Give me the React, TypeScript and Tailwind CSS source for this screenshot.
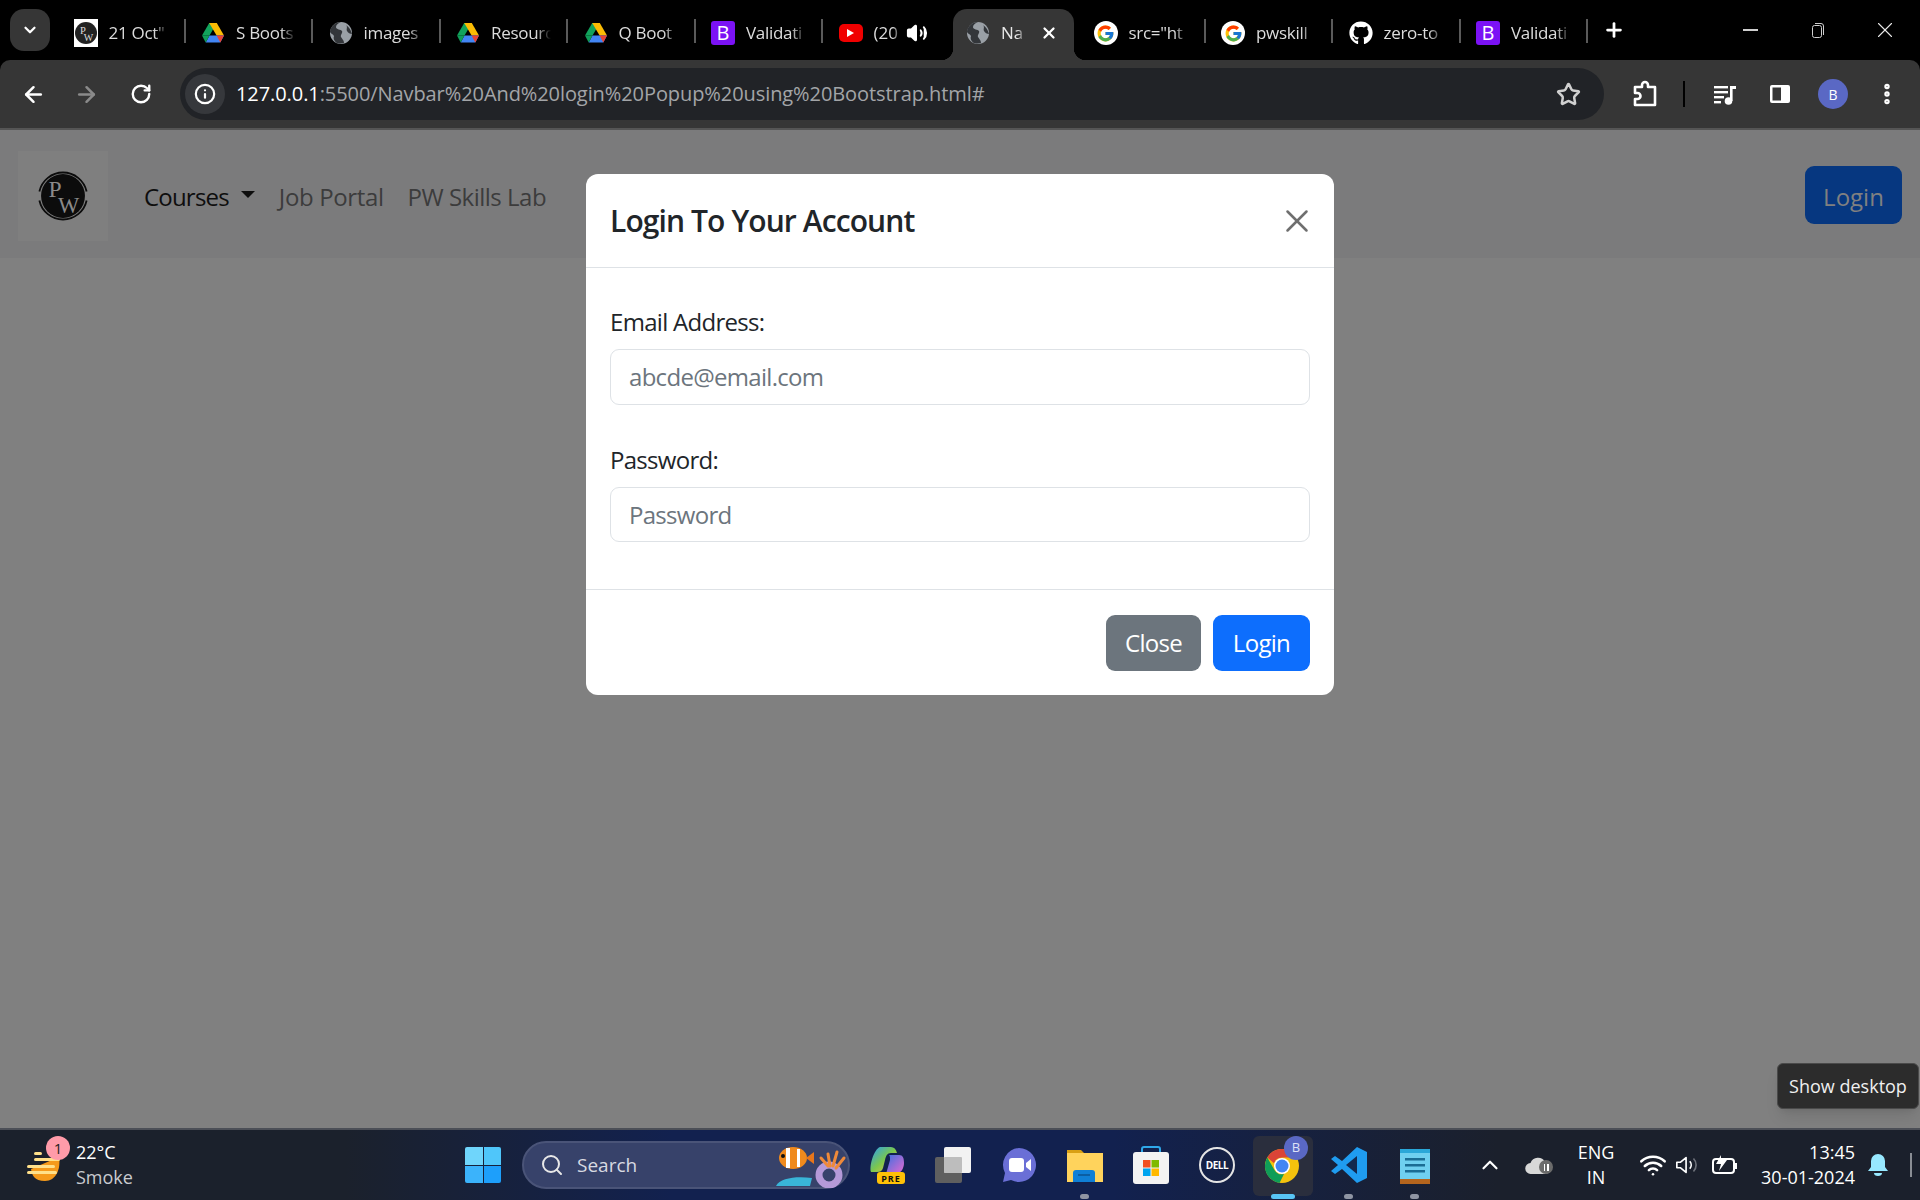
import { ArrowLeft, ArrowRight, ChevronDown, ChevronUp, Info, MoreVertical, Plus, RotateCw, Search, Star, Volume2, Wifi, X } from 'lucide-react';
import { FaGithub } from 'react-icons/fa';
import { FcGoogle } from 'react-icons/fc';

type IconKind = 'pw' | 'drive' | 'globe' | 'bootstrap' | 'youtube' | 'google' | 'github';

const tabs: { icon: IconKind; title: string; active?: boolean; audio?: boolean }[] = [
  { icon: 'pw', title: '21 Oct"' },
  { icon: 'drive', title: 'S Boots' },
  { icon: 'globe', title: 'images' },
  { icon: 'drive', title: 'Resourc' },
  { icon: 'drive', title: 'Q Boot' },
  { icon: 'bootstrap', title: 'Validati' },
  { icon: 'youtube', title: '(20', audio: true },
  { icon: 'globe', title: 'Na', active: true },
  { icon: 'google', title: 'src="ht' },
  { icon: 'google', title: 'pwskill' },
  { icon: 'github', title: 'zero-to' },
  { icon: 'bootstrap', title: 'Validati' },
];

function PwLogo({ size }: { size: number }) {
  return (
    <svg width={size} height={size} viewBox="0 0 48 48">
      <circle cx="24" cy="24" r="19.5" fill="#0c0c0c" />
      <path d="M3 20A21.5 21.5 0 0 1 45 20M3 28A21.5 21.5 0 0 0 45 28" fill="none" stroke="#0c0c0c" strokeWidth="1.6" />
      <text x="17" y="25" fontFamily="Liberation Serif, serif" fontSize="21" fill="#8a8a8a" textAnchor="middle">P</text>
      <text x="29" y="39" fontFamily="Liberation Serif, serif" fontSize="20" fill="#8a8a8a" textAnchor="middle">W</text>
    </svg>
  );
}

function Favicon({ kind }: { kind: IconKind }) {
  if (kind === 'pw') {
    return (
      <div className="flex h-7 w-6 items-center justify-center bg-white">
        <svg width="24" height="24" viewBox="0 0 48 48">
          <circle cx="24" cy="24" r="22" fill="#222" />
          <text x="18" y="25" fontFamily="Liberation Serif, serif" fontSize="21" fill="#ddd" textAnchor="middle">P</text>
          <text x="29" y="40" fontFamily="Liberation Serif, serif" fontSize="20" fill="#ddd" textAnchor="middle">W</text>
        </svg>
      </div>
    );
  }
  if (kind === 'drive') {
    return (
      <svg width="24" height="24" viewBox="0 0 24 24">
        <path d="M8.2 2h7.6l-7.3 12.6H1z" fill="#12a35c" />
        <path d="M15.800 2 23 14.600h-7.400L8.200 2z" fill="#fbbc04" />
        <path d="M23 14.600 19.300 21.500H4.700L8.500 14.600z" fill="#4285f4" />
        <path d="M1 14.600h7.500l-3.800 6.900z" fill="#0f9d58" />
        <path d="M15.600 14.600H23l-3.700 6.900z" fill="#ea4335" />
      </svg>
    );
  }
  if (kind === 'globe') {
    return (
      <svg width="24" height="24" viewBox="0 0 24 24">
        <circle cx="12" cy="12" r="11" fill="#9aa0a6" />
        <path d="M12 1c-3 1-5 3-5 5 0 3 5 2 6 4s-2 4-1 6 3 3 3 6c-2 .6-6 .6-8-.6C5 20 4 17 5 15c-1-2-3-2-4-4 0-5 5-10 11-10zM17 4c3 2 5 5 6 9-2 0-4-1-5-3s1-4-1-6z" fill="#33363a" />
      </svg>
    );
  }
  if (kind === 'bootstrap') {
    return (
      <div className="flex h-6 w-6 items-center justify-center rounded-[3px] bg-[#7b12f5] font-['Open_Sans',sans-serif] text-[20px] leading-none text-white">
        B
      </div>
    );
  }
  if (kind === 'youtube') {
    return (
      <div className="flex h-[18px] w-6 items-center justify-center rounded-[5px] bg-[#f00000]">
        <div className="h-0 w-0 border-y-[4px] border-l-[7px] border-y-transparent border-l-white" />
      </div>
    );
  }
  if (kind === 'google') {
    return (
      <div className="flex h-6 w-6 items-center justify-center rounded-full bg-white">
        <FcGoogle size={19} />
      </div>
    );
  }
  return (
    <div className="flex h-6 w-6 items-center justify-center rounded-full bg-black">
      <FaGithub size={24} color="#fff" />
    </div>
  );
}

function TabStrip() {
  return (
    <div className="flex h-[60px] items-start bg-black">
      <div className="ml-[10px] mt-[9px] flex h-[42px] w-[40px] items-center justify-center rounded-[14px] bg-[#363636]">
        <ChevronDown size={18} strokeWidth={3} color="#fff" />
      </div>
      <div className="ml-[8.5px] flex">
        {tabs.map((tab, i) => (
          <div
            key={i}
            className={
              tab.active
                ? 'relative ml-[2px] mr-[4.5px] mt-[9px] flex h-[51px] w-[121px] items-center rounded-t-[14px] bg-[#363636] pb-[3px] pl-[13px]'
                : 'relative mt-[9px] flex h-[51px] w-[127.5px] items-center pb-[3px] pl-[15px]'
            }
          >
            <div className="flex w-6 shrink-0 justify-center">
              <Favicon kind={tab.icon} />
            </div>
            <span
              className={
                tab.active
                  ? "ml-[11px] w-[24px] overflow-hidden whitespace-nowrap font-['Open_Sans',sans-serif] text-[17px] text-[#e8e8e8] [mask-image:linear-gradient(to_right,black_70%,transparent)]"
                  : tab.audio
                    ? "ml-[11px] w-[27px] overflow-hidden whitespace-nowrap font-['Open_Sans',sans-serif] text-[17px] text-[#dcdcdc] [mask-image:linear-gradient(to_right,black_70%,transparent)]"
                    : "ml-[11px] w-[60px] overflow-hidden whitespace-nowrap font-['Open_Sans',sans-serif] text-[17px] tracking-[-0.3px] text-[#dcdcdc] [mask-image:linear-gradient(to_right,black_75%,transparent)]"
              }
            >
              {tab.title}
            </span>
            {tab.audio && <Volume2 size={22} color="#fff" fill="#fff" className="ml-[5px]" />}
            {tab.active && <X size={18} strokeWidth={3} color="#fff" className="ml-[15px]" />}
            {!tab.active && i !== 6 && <div className="absolute left-[125px] top-[10px] h-[24px] w-[2px] bg-[#5a5a5a]" />}
            {tab.active && (
              <>
                <div className="absolute bottom-0 left-[-12px] h-[12px] w-[12px] bg-[radial-gradient(circle_at_0_0,transparent_12px,#363636_12.500px)]" />
                <div className="absolute bottom-0 right-[-12px] h-[12px] w-[12px] bg-[radial-gradient(circle_at_100%_0,transparent_12px,#363636_12.500px)]" />
              </>
            )}
          </div>
        ))}
        <div className="ml-[5px] mt-[9px] flex h-[42px] w-[40px] items-center justify-center">
          <Plus size={22} strokeWidth={3} color="#fff" />
        </div>
      </div>
      <div className="ml-auto flex h-[60px] items-center">
        <div className="flex w-[68px] justify-center"><div className="h-[1.500px] w-[15px] bg-[#cfcfcf]" /></div>
        <div className="flex w-[68px] justify-center">
          <svg width="16" height="18" viewBox="0 0 16 18" fill="none" stroke="#cfcfcf" strokeWidth="1">
            <rect x="2.500" y="4.500" width="9" height="12" rx="2" />
            <path d="M5 2.500h6a2.500 2.500 0 0 1 2.500 2.500v9" />
          </svg>
        </div>
        <div className="flex w-[68px] justify-center pl-[2px] pr-[4px]"><X size={26} strokeWidth={1} color="#e8e8e8" /></div>
      </div>
    </div>
  );
}

function Toolbar() {
  return (
    <div className="flex h-[70px] items-center rounded-t-[10px] border-b-2 border-[#555555] bg-[#363636]">
      <div className="flex w-[180px] items-center pl-[20px]">
        <div className="flex w-[26px] justify-center"><ArrowLeft size={25} strokeWidth={2.400} color="#fff" /></div>
        <div className="ml-[27px] flex w-[26px] justify-center"><ArrowRight size={25} strokeWidth={2.400} color="#8a8a8a" /></div>
        <div className="ml-[29px] flex w-[26px] justify-center"><RotateCw size={22} strokeWidth={2.600} color="#fff" /></div>
      </div>
      <div className="flex h-[52px] w-[1424px] items-center rounded-full bg-[#212327] pl-[5px] pr-[23px]">
        <div className="flex h-[40px] w-[40px] items-center justify-center rounded-full bg-[#36383c]">
          <Info size={22} strokeWidth={2.400} color="#fff" />
        </div>
        <div className="ml-[11px] font-['Open_Sans',sans-serif] text-[20px] tracking-[-0.08px] text-[#a3a5a8]">
          <span className="text-white">127.0.0.1</span>:5500/Navbar%20And%20login%20Popup%20using%20Bootstrap.html#
        </div>
        <Star size={25} strokeWidth={2.400} color="#d0d0d0" className="ml-auto" />
      </div>
      <div className="flex items-center">
        <svg width="28" height="28" viewBox="0 0 28 28" fill="none" stroke="#fff" strokeWidth="2.600" strokeLinejoin="round" className="ml-[27px]">
          <path d="M4 7h7V5a3 3 0 0 1 6 0v2h7v18H4v-6h2.500a3 3 0 0 0 0-6H4z" />
        </svg>
        <div className="ml-[24px] h-[26px] w-[2px] bg-black" />
        <svg width="28" height="28" viewBox="0 0 28 28" fill="#fff" className="ml-[26px]">
          <rect x="3" y="6" width="14" height="2.400" />
          <rect x="3" y="11" width="14" height="2.400" />
          <rect x="3" y="16" width="10" height="2.400" />
          <rect x="3" y="21" width="7" height="2.400" />
          <rect x="19" y="6" width="2.600" height="15" />
          <rect x="19" y="6" width="6" height="3" />
          <circle cx="17.500" cy="21" r="3.800" />
        </svg>
        <svg width="24" height="24" viewBox="0 0 24 24" className="ml-[29px]">
          <rect x="2" y="3" width="20" height="18" rx="2" fill="#fff" />
          <rect x="4.500" y="5.500" width="8.500" height="13" fill="#363636" />
        </svg>
        <div className="ml-[26px] flex h-[30px] w-[30px] items-center justify-center rounded-full bg-[#5a68c4] font-['Open_Sans',sans-serif] text-[14px] text-white">
          B
        </div>
        <MoreVertical size={26} strokeWidth={3} color="#fff" className="ml-[26px]" />
      </div>
    </div>
  );
}

function Navbar() {
  return (
    <div className="flex h-[128px] items-center bg-[#7b7b7c] pt-[5px] font-['Open_Sans',sans-serif] text-[24px]">
      <div className="ml-[18px] mt-[-2px] flex h-[90px] w-[90px] items-center justify-center bg-[#7f7f7f]">
        <PwLogo size={54} />
      </div>
      <div className="ml-[36px] flex items-center tracking-[-0.8px] text-[#0e0e0e]">
        Courses
        <div className="mb-[4px] ml-[12px] h-0 w-0 border-x-[7px] border-t-[7px] border-x-transparent border-t-[#0e0e0e]" />
      </div>
      <div className="ml-[24px] tracking-[-0.37px] text-[#3c3c3c]">Job Portal</div>
      <div className="ml-[24px] tracking-[-0.5px] text-[#3c3c3c]">PW Skills Lab</div>
      <div className="ml-auto mr-[18px] mt-[-3px] flex h-[58px] w-[97px] items-center justify-center rounded-[9px] bg-[#063780] pt-[3px] text-[#808080]">
        Login
      </div>
    </div>
  );
}

function LoginModal() {
  return (
    <div className="absolute inset-x-0 top-[44px] flex justify-center">
      <div className="w-[748px] rounded-[12px] bg-white font-['Open_Sans',sans-serif] text-[24px] tracking-[-0.7px] text-[#212529]">
        <div className="flex h-[94px] items-center justify-between border-b border-[#dee2e6] px-[24px]">
          <h5 className="text-[30px] font-semibold tracking-[-0.9px]">Login To Your Account</h5>
          <X size={38} strokeWidth={1.600} color="#6f6f6f" className="mr-[-6px]" />
        </div>
        <div className="border-b border-[#dee2e6] px-[24px] pb-[47px] pt-[36px]">
          <div className="mb-[9px] h-[36px] leading-[36px]">Email Address:</div>
          <div className="mb-[37px] flex h-[56px] items-center rounded-[9px] border border-[#dee2e6] px-[18px] text-[#6c757d]">abcde@email.com</div>
          <div className="mb-[9px] h-[36px] leading-[36px]">Password:</div>
          <div className="flex h-[55px] items-center rounded-[9px] border border-[#dee2e6] px-[18px] text-[#6c757d]">Password</div>
        </div>
        <div className="flex h-[105px] items-center justify-end gap-[12px] px-[24px] text-white">
          <div className="flex h-[56px] w-[95px] items-center justify-center rounded-[9px] bg-[#6c757d]">Close</div>
          <div className="flex h-[56px] w-[97px] items-center justify-center rounded-[9px] bg-[#0d6efd]">Login</div>
        </div>
      </div>
    </div>
  );
}

function WeatherIcon() {
  return (
    <svg width="36" height="40" viewBox="0 0 36 40">
      <path d="M32 12c2 12-3 24-14 24S5 30 4 24z" fill="#f59a1b" />
      <rect x="7" y="13" width="26" height="3" rx="1.500" fill="#ffe08a" />
      <rect x="0" y="20" width="28" height="3" rx="1.500" fill="#ffe08a" />
      <rect x="0" y="26" width="30" height="3" rx="1.500" fill="#ffe08a" />
      <rect x="7" y="7" width="8" height="3" rx="1.500" fill="#ffe08a" />
    </svg>
  );
}

function Fish() {
  return (
    <svg width="76" height="46" viewBox="0 0 76 46">
      <path d="M2 44c4-8 20-10 36-8l-2 8z" fill="#39b5d8" />
      <ellipse cx="19" cy="16" rx="14" ry="11" fill="#f08a1d" />
      <rect x="12" y="6" width="4" height="20" fill="#fff" />
      <rect x="23" y="7" width="3" height="18" fill="#fff" />
      <path d="M32 16l8-6v12z" fill="#e8761a" />
      <circle cx="9" cy="14" r="2" fill="#111" />
      <circle cx="55" cy="33" r="10" fill="none" stroke="#b59ad8" strokeWidth="7" />
      <path d="M56 24l-2-12M59 24l4-14M62 26l8-10M54 24l-7-8" stroke="#ef8a3a" strokeWidth="3" strokeLinecap="round" />
    </svg>
  );
}

function TaskIcon({ children, dot, running }: { children: React.ReactNode; dot?: boolean; running?: boolean }) {
  return (
    <div className="relative flex h-[60px] w-[66px] items-center justify-center">
      {running && <div className="absolute left-[3px] top-[1px] h-[60px] w-[60px] rounded-[6px] bg-[#2a2e3d]" />}
      <div className="relative flex items-center justify-center">{children}</div>
      {dot && <div className="absolute bottom-[-4px] left-[28px] h-[5px] w-[9px] rounded-full bg-[#8f95a3]" />}
      {running && <div className="absolute bottom-[-4px] left-[21px] h-[5px] w-[24px] rounded-full bg-[#58c5f5]" />}
    </div>
  );
}

function Taskbar() {
  return (
    <div className="flex h-[72px] shrink-0 items-center border-t-2 border-[#4c4f57] bg-[linear-gradient(90deg,#1b212c_0%,#1b212c_18%,#12214f_35%,#12214f_58%,#1b202c_78%,#1b202c_100%)] font-['Open_Sans',sans-serif] text-white">
      <div className="flex w-[465px] items-center pl-[27px]">
        <div className="relative">
          <WeatherIcon />
          <div className="absolute left-[19px] top-[-9px] flex h-[24px] w-[24px] items-center justify-center rounded-full bg-[#ff9ba9] text-[15px] text-[#222]">1</div>
        </div>
        <div className="ml-[13px] text-[18px] leading-[25px]">
          <div>22°C</div>
          <div className="text-[#c9cbd0]">Smoke</div>
        </div>
      </div>
      <div className="grid h-[36px] w-[36px] grid-cols-2 gap-[1px]">
        <div className="rounded-tl-[2px] bg-[#6fd5fb]" />
        <div className="rounded-tr-[2px] bg-[#4fc6fa]" />
        <div className="rounded-bl-[2px] bg-[#3bb3fb]" />
        <div className="rounded-br-[2px] bg-[#1d9ffb]" />
      </div>
      <div className="ml-[21px] flex h-[48px] w-[328px] items-center rounded-full border-2 border-[#4a5478] bg-[#37426a] pl-[16px]">
        <Search size={24} strokeWidth={2} color="#e8e8e8" />
        <span className="ml-[13px] text-[19px] text-[#d8dae2]">Search</span>
        <div className="ml-auto mr-[-2px]"><Fish /></div>
      </div>
      <div className="ml-[4px] flex">
        <TaskIcon>
          <svg width="36" height="38" viewBox="0 0 36 38">
            <defs>
              <linearGradient id="cp" x1="0" y1="0" x2="1" y2="1">
                <stop offset="0" stopColor="#2a9df4" />
                <stop offset="0.5" stopColor="#7ac74f" />
                <stop offset="1" stopColor="#f5c542" />
              </linearGradient>
              <linearGradient id="cp2" x1="0" y1="0" x2="1" y2="1">
                <stop offset="0" stopColor="#3c6fe0" />
                <stop offset="1" stopColor="#e86ad0" />
              </linearGradient>
            </defs>
            <path d="M11 1h11c3 0 5 2 6 6h-6c-4 0-5 3-6 7l-2 8c-1 3-3 4-6 4H2C0 20 5 3 11 1z" fill="url(#cp)" />
            <path d="M20 9h10c4 0 5 3 5 8s-3 11-9 11h-9l4-14c0-3 0-4-1-5z" fill="url(#cp2)" />
            <rect x="8" y="26" width="28" height="12" rx="3" fill="#ffc107" />
            <text x="22" y="35.500" fontFamily="Open Sans, sans-serif" fontSize="9" fontWeight="700" fill="#111" textAnchor="middle" letterSpacing="1">PRE</text>
          </svg>
        </TaskIcon>
        <TaskIcon>
          <svg width="36" height="36" viewBox="0 0 36 36">
            <rect x="0" y="10" width="27" height="26" rx="2" fill="#5f5f5f" />
            <rect x="9" y="0" width="27" height="26" rx="2" fill="#f2f2f2" />
            <rect x="9" y="10" width="18" height="16" rx="1" fill="#bdbdbd" />
          </svg>
        </TaskIcon>
        <TaskIcon>
          <svg width="36" height="36" viewBox="0 0 36 36">
            <path d="M18 1a17 17 0 1 1-8 32l-8 2 2-9A17 17 0 0 1 18 1z" fill="#6a6fd6" />
            <rect x="8" y="11" width="15" height="14" rx="3" fill="#fff" />
            <path d="M25 16l5-4v12l-5-4z" fill="#fff" />
          </svg>
        </TaskIcon>
        <TaskIcon dot>
          <svg width="36" height="36" viewBox="0 0 36 36">
            <path d="M0 3h14l4 4h18v28H0z" fill="#d9a014" />
            <rect x="0" y="6" width="36" height="29" fill="#ffd35c" />
            <path d="M6 35v-9a3 3 0 0 1 3-3h16a3 3 0 0 1 3 3v9z" fill="#0f7fd6" />
            <rect x="11" y="27" width="12" height="2" fill="#0b5ea3" />
          </svg>
        </TaskIcon>
        <TaskIcon>
          <svg width="36" height="38" viewBox="0 0 36 38">
            <path d="M9 8V3a2 2 0 0 1 2-2h14a2 2 0 0 1 2 2v5" fill="none" stroke="#2fa8ea" strokeWidth="2" />
            <rect x="0" y="6" width="36" height="32" rx="3" fill="#f3f3f3" />
            <rect x="10" y="14" width="7.500" height="7.500" fill="#f25022" />
            <rect x="18.500" y="14" width="7.500" height="7.500" fill="#7fba00" />
            <rect x="10" y="22.500" width="7.500" height="7.500" fill="#00a4ef" />
            <rect x="18.500" y="22.500" width="7.500" height="7.500" fill="#ffb900" />
          </svg>
        </TaskIcon>
        <TaskIcon>
          <div className="flex h-[36px] w-[36px] items-center justify-center rounded-full border-2 border-[#e4e4e4] text-[10px] font-bold tracking-[-0.5px]">DELL</div>
        </TaskIcon>
        <TaskIcon running>
          <svg width="38" height="38" viewBox="0 0 38 38">
            <circle cx="18" cy="20" r="17" fill="#f4c20d" />
            <path d="M18 3a17 17 0 0 1 14.700 8.500H18a8.500 8.500 0 0 0-8 5.800L3.300 11.500A17 17 0 0 1 18 3z" fill="#db4437" />
            <path d="M3.300 11.500l7.300 12.700A8.500 8.500 0 0 0 20 28l-4.500 9A17 17 0 0 1 3.300 11.500z" fill="#0f9d58" />
            <circle cx="18" cy="20" r="8" fill="#fff" />
            <circle cx="18" cy="20" r="6.500" fill="#4285f4" />
          </svg>
          <div className="absolute left-[20px] top-[-10px] flex h-[24px] w-[24px] items-center justify-center rounded-full bg-[#5a68c4] text-[13px] text-[#dfe2f7]">B</div>
        </TaskIcon>
        <TaskIcon dot>
          <svg width="36" height="36" viewBox="0 0 36 36">
            <path d="M26 0l10 5v26l-10 5-15-14-7 5-4-3 7-6-7-6 4-3 7 5z" fill="#1f9cf0" />
            <path d="M26 9v18l-11-9z" fill="#12284f" />
          </svg>
        </TaskIcon>
        <TaskIcon dot>
          <svg width="32" height="38" viewBox="0 0 32 38">
            <rect x="1" y="3" width="30" height="33" rx="2" fill="#6fd0f0" />
            <rect x="1" y="33" width="30" height="5" fill="#b5651d" />
            <rect x="1" y="3" width="30" height="4" fill="#2aa7d8" />
            <rect x="6" y="12" width="20" height="2.500" fill="#1b6d94" />
            <rect x="6" y="18" width="20" height="2.500" fill="#1b6d94" />
            <rect x="6" y="24" width="20" height="2.500" fill="#1b6d94" />
          </svg>
        </TaskIcon>
      </div>
      <div className="ml-[24px] flex items-center">
        <div className="flex w-[36px] justify-center"><ChevronUp size={26} strokeWidth={2} color="#fff" /></div>
        <div className="relative flex w-[60px] justify-center">
          <svg width="26" height="18" viewBox="0 0 26 18"><path d="M6 18a5.500 5.500 0 0 1-.5-11A8 8 0 0 1 20 6a6 6 0 0 1 0 12z" fill="#d8d8d8" /></svg>
          <div className="absolute left-[31px] top-[4px] flex h-[14px] w-[14px] items-center justify-center gap-[2px] rounded-full bg-[#6b6b6b]">
            <div className="h-[7px] w-[1.500px] bg-white" />
            <div className="h-[7px] w-[1.500px] bg-white" />
          </div>
        </div>
        <div className="w-[56px] text-center text-[18px] leading-[25px]">
          <div>ENG</div>
          <div>IN</div>
        </div>
        <div className="ml-[7px] flex w-[44px] justify-center"><Wifi size={28} strokeWidth={2.200} color="#fff" /></div>
        <div className="flex w-[24px] justify-center">
          <svg width="26" height="24" viewBox="0 0 26 24" fill="none" stroke="#fff" strokeWidth="1.800" strokeLinejoin="round">
            <path d="M2 9v6h4l6 5V4L6 9z" />
            <path d="M16 8a6 6 0 0 1 0 8" />
            <path d="M20 5a10 10 0 0 1 0 14" stroke="#6d7079" />
          </svg>
        </div>
        <div className="ml-[6px] flex w-[40px] justify-center">
          <svg width="26" height="22" viewBox="0 0 26 22" fill="none" stroke="#fff" strokeWidth="2">
            <rect x="1" y="5" width="21" height="14" rx="3" />
            <path d="M23.500 9v6" strokeWidth="3" />
            <path d="M9 1L4 10h5l-2 7 8-11H9z" fill="#fff" stroke="none" />
          </svg>
        </div>
        <div className="w-[110px] text-right text-[18px] leading-[25px]">
          <div>13:45</div>
          <div>30-01-2024</div>
        </div>
        <div className="flex w-[46px] justify-center">
          <svg width="22" height="24" viewBox="0 0 22 24" fill="#97e8ff">
            <path d="M11 1a7 7 0 0 1 7 7v6l3 4H1l3-4V8a7 7 0 0 1 7-7z" />
            <path d="M7 20h8a4 3 0 0 1-8 0z" />
          </svg>
        </div>
        <div className="ml-[9px] h-[24px] w-[2px] bg-[#8a8d94]" />
      </div>
    </div>
  );
}

export default function App() {
  return (
    <div className="flex h-[1200px] w-[1920px] flex-col overflow-hidden bg-black">
      <TabStrip />
      <Toolbar />
      <div className="relative flex-1 bg-[#808080]">
        <Navbar />
        <LoginModal />
        <div className="absolute bottom-[19px] right-[1px] flex h-[46px] w-[142px] items-center justify-center rounded-[6px] border border-[#4a4a4a] bg-[#2c2c2c] font-['Open_Sans',sans-serif] text-[18px] text-[#f0f0f0] shadow-lg">
          Show desktop
        </div>
      </div>
      <Taskbar />
    </div>
  );
}
